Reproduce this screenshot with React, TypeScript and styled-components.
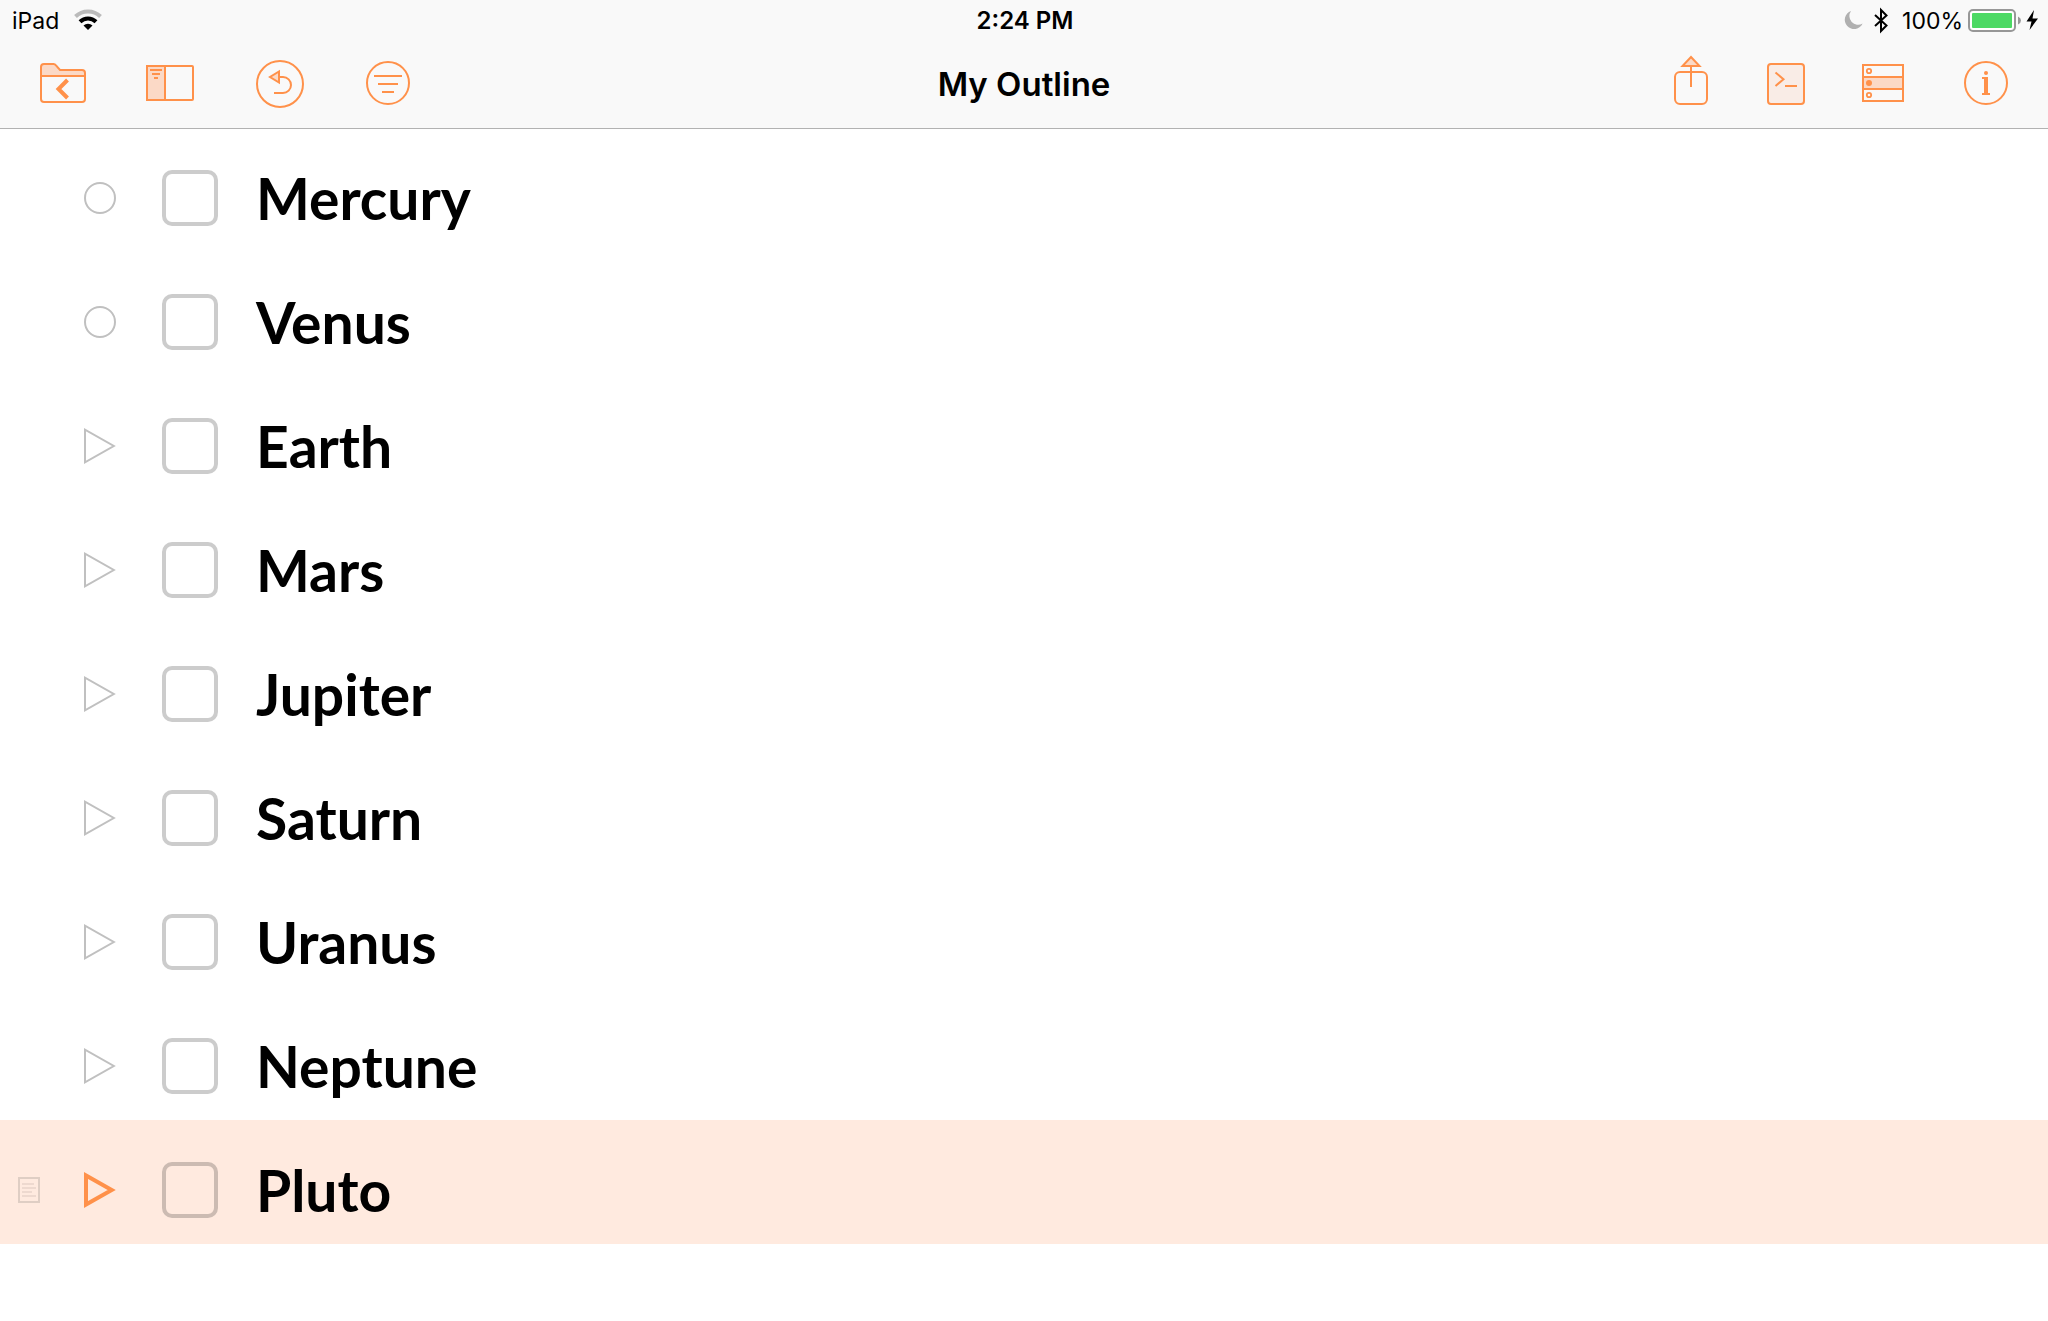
import React, { useState } from "react";
import styled, { createGlobalStyle } from "styled-components";

const ORANGE = "#ff914a";
const TINT = "#fbd9c6";

const GlobalStyle = createGlobalStyle`
  *, *::before, *::after { box-sizing: border-box; }
  body {
    margin: 0;
    background: #ffffff;
    color: #000000;
    font-family: Inter, "Liberation Sans", sans-serif;
  }
`;

const Header = styled.header`
  background: #f9f9f9;
  box-shadow: 0 1px 0 #b2b2b2;
  position: relative;
`;

const StatusBar = styled.div`
  display: grid;
  grid-template-columns: 1fr auto 1fr;
  align-items: center;
  height: 40px;
  padding: 2px 10px 0 12px;
  font-size: 23px;
  line-height: 38px;
`;

const StatusGroup = styled.div<{ $end?: boolean; $gap: number }>`
  display: flex;
  align-items: center;
  justify-content: ${(p) => (p.$end ? "flex-end" : "flex-start")};
  gap: ${(p) => p.$gap}px;
`;

const Clock = styled.time`
  font-size: 24px;
  font-weight: 600;
`;

const Toolbar = styled.nav`
  display: grid;
  grid-template-columns: 1fr auto 1fr;
  align-items: center;
  height: 88px;
  padding: 0 40px;
`;

const ToolGroup = styled.div<{ $end?: boolean }>`
  display: flex;
  align-items: center;
  justify-content: ${(p) => (p.$end ? "flex-end" : "flex-start")};
  gap: ${(p) => (p.$end ? 58 : 60)}px;
`;

const Title = styled.h1`
  margin: 0;
  font-size: 33px;
  font-weight: 600;
  line-height: 40px;
`;

const PlainButton = styled.button`
  display: block;
  padding: 0;
  border: 0;
  background: none;
  cursor: pointer;
  svg { display: block; overflow: visible; }
`;

const Drawing = styled.svg`
  display: block;
  flex: none;
  overflow: visible;
`;

const Outline = styled.ul`
  margin: 0;
  padding: 0;
  list-style: none;
`;

const Row = styled.li<{ $selected: boolean }>`
  display: grid;
  grid-template-columns: 66px 78px 94px 1fr;
  align-items: center;
  padding: 42px 18px 26px;
  background: ${(p) => (p.$selected ? "#ffeadf" : "transparent")};
`;

const Gutter = styled.div`
  display: flex;
`;

const Check = styled.input`
  appearance: none;
  display: block;
  width: 56px;
  height: 56px;
  margin: 0;
  border: 4px solid rgba(0, 0, 0, 0.2);
  border-radius: 10px;
  cursor: pointer;
  &:checked { background: rgba(0, 0, 0, 0.2); }
`;

const Topic = styled.label`
  font-family: "Chalkboard SE", Chalkboard, Lato, sans-serif;
  font-size: 57px;
  font-weight: 700;
  line-height: 56px;
`;

type ToolProps = { label: string; width: number; children: React.ReactNode };

function Tool({ label, width, children }: ToolProps) {
  return (
    <PlainButton type="button" aria-label={label}>
      <svg width={width} height={60} viewBox={`0 0 ${width} 60`} fill="none" stroke={ORANGE} strokeWidth={2}>
        {children}
      </svg>
    </PlainButton>
  );
}

function StatusIcons() {
  return (
    <StatusGroup $end $gap={5}>
      <Drawing width={53} height={26} viewBox="0 0 53 26" aria-label="Do not disturb, Bluetooth">
        <path d="M7 3A9.300 9.300 0 1 0 18.600 15.500A8.700 8.700 0 0 1 7 3Z" fill="#b0b0b0" />
        <path d="M31 7 42.500 17.500 37 23V2L42.500 7.500 31 18" fill="none" stroke="#000" strokeWidth="2" />
      </Drawing>
      <span>100%</span>
      <Drawing width={70} height={24} viewBox="0 0 70 24" aria-label="Battery charging">
        <rect x="1" y="1" width="46" height="21" rx="4" fill="#fff" stroke="#979797" strokeWidth="2" />
        <rect x="4" y="4" width="40" height="15" rx="1" fill="#4cd964" />
        <path d="M50 7.500q3 1.500 3 4t-3 4z" fill="#979797" />
        <path d="M66 1 58.500 12.500h5L61.500 21 70 9.500h-5.500z" fill="#000" />
      </Drawing>
    </StatusGroup>
  );
}

function RowHandle({ name, leaf, selected }: { name: string; leaf: boolean; selected: boolean }) {
  return (
    <PlainButton type="button" aria-label={leaf ? `Select ${name}` : `Expand ${name}`}>
      <svg width={32} height={36} viewBox="0 0 32 36" fill="none" stroke={selected ? ORANGE : "#c0c0c0"} strokeWidth={selected ? 4 : 2}>
        {leaf ? (
          <circle cx="16" cy="18" r="15" />
        ) : selected ? (
          <path d="M2 3.500V32.500L27.700 18Z" />
        ) : (
          <path d="M1 1.700V34.300L29.800 18Z" />
        )}
      </svg>
    </PlainButton>
  );
}

const planets = [
  { name: "Mercury", leaf: true },
  { name: "Venus", leaf: true },
  { name: "Earth", leaf: false },
  { name: "Mars", leaf: false },
  { name: "Jupiter", leaf: false },
  { name: "Saturn", leaf: false },
  { name: "Uranus", leaf: false },
  { name: "Neptune", leaf: false },
  { name: "Pluto", leaf: false },
];

export default function App() {
  const [selected, setSelected] = useState("Pluto");

  return (
    <>
      <GlobalStyle />
      <Header>
        <StatusBar>
          <StatusGroup $gap={15}>
            <span>iPad</span>
            <Drawing width={28} height={22} viewBox="0 0 28 22" aria-label="Wi-Fi">
              <path d="M1.500 6.500a18 18 0 0 1 25 0" fill="none" stroke="#bbb" strokeWidth="4" />
              <path d="M6 11.700a11.500 11.500 0 0 1 16 0" fill="none" stroke="#000" strokeWidth="4" />
              <path d="M9.500 15.500a6.500 6.500 0 0 1 9 0L14 20z" fill="#000" />
            </Drawing>
          </StatusGroup>
          <Clock>2:24 PM</Clock>
          <StatusIcons />
        </StatusBar>
        <Toolbar aria-label="Document">
          <ToolGroup>
            <Tool label="Documents" width={46}>
              <path d="M1 22V13a3 3 0 0 1 3-3h9.500q1.500 0 2.500 1.500L20 16h22a3 3 0 0 1 3 3v3z" fill={TINT} />
              <path d="M1 22V45a3 3 0 0 0 3 3H42a3 3 0 0 0 3-3V22" />
              <path d="M27.500 26 18.500 35 27.500 44" strokeWidth="4" />
            </Tool>
            <Tool label="Sidebar" width={48}>
              <path d="M1 12H19V46H1z" fill={TINT} />
              <rect x="1" y="12" width="46" height="34" rx="1" />
              <path d="M4 16H16M6 20H14M8 24H12" />
            </Tool>
            <Tool label="Undo" width={50}>
              <circle cx="26" cy="30" r="23" />
              <path d="M25 23H29A8 8 0 0 1 29 39H20" />
              <path d="M25 17.500V28.500L16 23Z" fill={TINT} />
            </Tool>
            <Tool label="Filter" width={46}>
              <circle cx="24" cy="29" r="21" />
              <path d="M10 22H38M14 30H34M18 38H30" />
            </Tool>
          </ToolGroup>
          <Title>My Outline</Title>
          <ToolGroup $end>
            <Tool label="Share" width={35}>
              <rect x="1" y="18" width="32" height="32" rx="5" />
              <path d="M17 12V33" />
              <path d="M17 3 25.500 12H8.500Z" fill={TINT} />
            </Tool>
            <Tool label="Console" width={37}>
              <rect x="1" y="10" width="36" height="40" rx="3" fill="#f9ece6" />
              <path d="M8.500 18.500 16.500 25.200 8.500 32M18 32H30" />
            </Tool>
            <Tool label="Row style" width={42}>
              <path d="M1 23H41V35H1z" fill={TINT} />
              <rect x="1" y="11" width="40" height="36" />
              <circle cx="7" cy="17" r="2.200" strokeWidth="1.800" />
              <circle cx="7" cy="29" r="3" fill={ORANGE} stroke="none" />
              <circle cx="7" cy="41" r="2.200" strokeWidth="1.800" />
            </Tool>
            <Tool label="Inspector" width={46}>
              <circle cx="24" cy="29" r="21" />
              <circle cx="24" cy="19" r="2" fill={ORANGE} stroke="none" />
              <path d="M20 24H24M20 40H28" />
              <path d="M24 23V40" strokeWidth="4" />
            </Tool>
          </ToolGroup>
        </Toolbar>
      </Header>
      <main>
        <Outline>
          {planets.map(({ name, leaf }) => (
            <Row key={name} $selected={selected === name} onClick={() => setSelected(name)}>
              <Gutter>
                {selected === name && (
                  <PlainButton type="button" aria-label={`Note for ${name}`}>
                    <svg width={22} height={26} viewBox="0 0 22 26" fill="none" stroke="#dfcec4" strokeWidth={2}>
                      <rect x="1" y="1" width="20" height="24" />
                      <path d="M4 7H16M4 11H18M4 15H14M4 19H18" stroke="#eed9cf" />
                    </svg>
                  </PlainButton>
                )}
              </Gutter>
              <RowHandle name={name} leaf={leaf} selected={selected === name} />
              <Check type="checkbox" id={`done-${name}`} />
              <Topic htmlFor={`done-${name}`}>{name}</Topic>
            </Row>
          ))}
        </Outline>
      </main>
    </>
  );
}
